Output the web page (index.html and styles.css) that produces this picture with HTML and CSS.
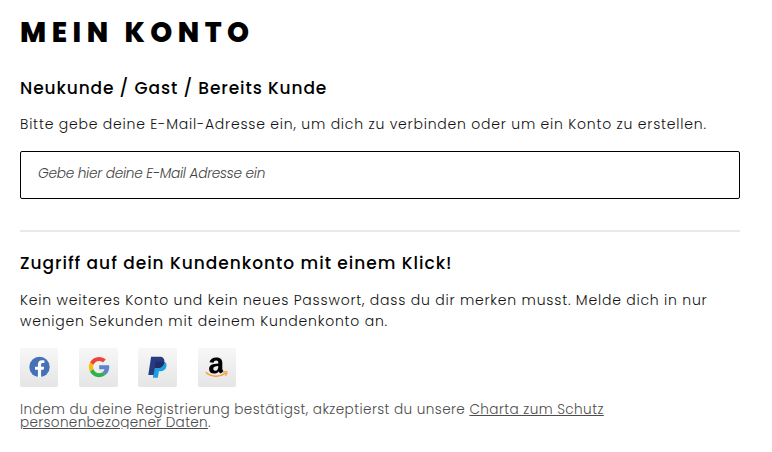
FILE: index.html
```html
<!DOCTYPE html>
<html lang="de">
<head>
  <meta charset="utf-8">
  <meta name="viewport" content="width=device-width, initial-scale=1.0">
  <title>Mein Konto</title>
  <link rel="stylesheet" href="styles.css">
</head>
<body>

<main class="account">
  <h1>MEIN KONTO</h1>

  <form method="POST">
    <h2 class="new">Neukunde / Gast / Bereits Kunde</h2>
    <p class="ask"><label for="email">Bitte gebe deine E-Mail-Adresse ein, um dich zu verbinden oder um ein Konto zu erstellen.</label></p>
    <input id="email" name="email" type="email" placeholder="Gebe hier deine E-Mail Adresse ein">
  </form>

  <hr>

  <h2 class="quick">Zugriff auf dein Kundenkonto mit einem Klick!</h2>
  <p class="info">Kein weiteres Konto und kein neues Passwort, dass du dir merken musst. Melde dich in nur<br>wenigen Sekunden mit deinem Kundenkonto an.</p>

  <div class="social">
    <a href="#" aria-label="Facebook">
      <svg viewBox="0 0 22 22">
        <circle cx="10.5" cy="11" r="10.2" fill="#4571b8"/>
        <path fill="#fff" d="M8.900 21.500v-7.700H6v-3h2.900V8.500c0-2.800 1.600-4.300 4.100-4.300.9 0 1.900.1 2.400.3v2.600h-1.500c-1.400 0-1.800.7-1.800 1.700v2h3l-.5 3h-2.500v7.700z"/>
      </svg>
    </a>
    <a href="#" aria-label="Google">
      <svg viewBox="0 0 22 22">
        <path fill="#f04336" d="M2 6.500C3.800 3 7 .9 11 .9c2.700 0 5 1 6.800 2.600L14.900 6.400C13.900 5.400 12.600 4.900 11 4.900c-2.600 0-4.800 1.700-5.600 4.100z"/>
        <path fill="#fbbb06" d="M2 6.500 5.400 9a6.400 6.400 0 0 0 0 4L2 15.600a10.200 10.200 0 0 1 0-9.100z"/>
        <path fill="#2fb24c" d="M5.400 13c.8 2.400 3 4.200 5.600 4.200 1.400 0 2.500-.4 3.400-1l3.300 2.600a10 10 0 0 1-6.700 2.400c-4 0-7.300-2.300-9-5.600z"/>
        <path fill="#5b86c9" d="M11.200 9.300h10c.5 3.900-.8 7.400-3.500 9.500l-3.300-2.600c1.100-.7 1.800-1.700 2.100-2.900h-5.300z"/>
      </svg>
    </a>
    <a href="#" aria-label="PayPal">
      <svg viewBox="0 0 22 22">
        <path fill="#1b9fde" d="M8 6h9.800c1.700 1 2 2.700 1.600 4.600-.7 3.300-3 4.700-6 4.700h-1.500l-1.100 6.500H5.900z"/>
        <path fill="#263b80" d="M4.100.8h8.200c3.700 0 5.600 2 5 5.500-.7 4-3.300 5.800-7.100 5.800H7.800l-1.200 7H1.300z"/>
        <path fill="#232c65" d="M8.800 6.200c.1-.6.500-.8 1-.8h5c1 0 1.900.2 2.500.5v.4c-.7 4-3.300 5.800-7.100 5.800H7.800z"/>
      </svg>
    </a>
    <a href="#" aria-label="Amazon">
      <svg class="amazon" viewBox="0 0 24 22">
        <path fill="#000" fill-rule="evenodd" d="M4.500 6.300C5.100 3 7.800 1.400 11.200 1.400c3.900 0 6.100 1.800 6.100 5.200v5.600c0 1.400.5 2.100 1.200 3l-2.800 2.400c-.9-.7-1.400-1.400-1.900-2.200-1.200 1.400-2.700 2.200-4.700 2.200-3.100 0-5-1.900-5-4.700 0-3.900 3.300-5.300 9.200-5.500V6.600c0-1.400-.7-2.200-2.100-2.200-1.500 0-2.300.8-2.600 2.300zM13.300 9.900c-3.200.1-5 .8-5 2.800 0 1.200.7 2 1.900 2 2.100 0 3.200-1.700 3.100-4.800z"/>
        <path fill="none" stroke="#f3a03a" stroke-width="1.500" d="M.7 16.300c5.700 5 14.100 5 20 .8"/>
        <path fill="none" stroke="#f3a03a" stroke-width="1.200" d="M18 16.200c1.500-.5 2.900-.7 3.900-.3.200 1-.4 2.700-1.500 3.900"/>
      </svg>
    </a>
  </div>

  <p class="legal">Indem du deine Registrierung bestätigst, akzeptierst du unsere <a href="#">Charta zum Schutz</a><br><a class="last" href="#">personenbezogener Daten</a>.</p>
</main>

</body>
</html>
```

FILE: styles.css
```css
* { box-sizing: border-box; }
body {
  margin: 0;
  font-family: Poppins, Inter, "Open Sans", sans-serif;
  font-size: 14px;
  font-weight: 300;
  line-height: 21px;
  color: #111;
  background: #fff;
}
.account { padding: 12px 32px 0 20px; }
h1, h2, p { margin: 0; white-space: nowrap; }
h1 { font-size: 28px; line-height: 42px; font-weight: 800; letter-spacing: 5.5px; color: #000; }
h2 { font-size: 17px; line-height: 26px; font-weight: 500; letter-spacing: .88px; color: #000; }
.new { margin-top: 21px; }
.quick { letter-spacing: .98px; }
.ask { margin: 13px 0 16px; letter-spacing: .78px; }
input {
  display: block;
  width: 100%;
  height: 48px;
  padding: 0 17px 2px;
  border: 1px solid #000;
  border-radius: 2px;
  font: italic 300 13.7px Poppins, Inter, sans-serif;
  letter-spacing: -.26px;
}
input::placeholder { color: #444; opacity: 1; }
hr { height: 2px; margin: 31px 0 18px; border: 0; background: #ece9e5; }
.info { margin: 14px 0 16px; letter-spacing: .78px; }
.social { display: flex; gap: 20.8px; }
.social a {
  display: flex;
  align-items: center;
  justify-content: center;
  width: 38.4px;
  height: 39px;
  padding: 0 0 1px 1px;
  border-radius: 2px;
  background: linear-gradient(#f7f7f7, #e5e5e5);
}
.social svg { width: 22px; height: 22px; }
.social .amazon { width: 24px; }
.legal { margin-top: 16px; font-size: 13.6px; line-height: 13px; letter-spacing: .42px; color: #4c4c4c; }
.legal a { color: inherit; }
.legal .last { letter-spacing: .34px; }
```
